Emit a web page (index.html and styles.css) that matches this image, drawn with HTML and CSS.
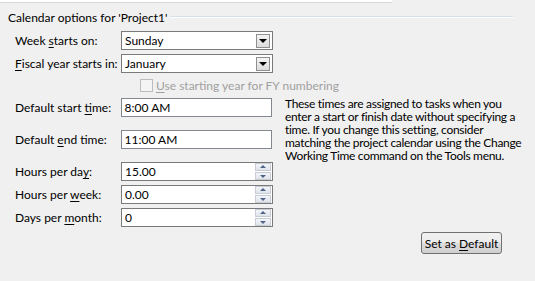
FILE: index.html
```html
<!DOCTYPE html>
<html lang="en">
<head>
  <meta charset="UTF-8">
  <title>Calendar options</title>
  <link rel="stylesheet" href="styles.css">
</head>
<body>
  <div class="top-strip"></div>

  <div class="group-title">
    <span>Calendar options for 'Project1'</span>
    <div class="etch"></div>
  </div>

  <div class="row">
    <label class="lbl">Week <u>s</u>tarts on:</label>
    <div class="select">
      <span>Sunday</span>
      <div class="drop"><div class="tri"></div></div>
    </div>
  </div>

  <div class="row row-tight">
    <label class="lbl"><u>F</u>iscal year starts in:</label>
    <div class="select">
      <span>January</span>
      <div class="drop"><div class="tri"></div></div>
    </div>
  </div>

  <div class="check-row">
    <div class="check"></div>
    <span class="disabled"><u>U</u>se starting year for FY numbering</span>
  </div>

  <!-- times + hint text -->
  <div class="times">
    <div class="times-left">
      <div class="row">
        <label class="lbl">Default start <u>t</u>ime:</label>
        <div class="field"><span>8:00 AM</span></div>
      </div>
      <div class="row row-wide">
        <label class="lbl">Default <u>e</u>nd time:</label>
        <div class="field"><span>11:00 AM</span></div>
      </div>
    </div>
    <p class="hint">These times are assigned to tasks when you enter a start or finish date without specifying a time. If you change this setting, consider matching the project calendar using the Change Working Time command on the Tools menu.</p>
  </div>

  <div class="row row-spin">
    <label class="lbl">Hours per da<u>y</u>:</label>
    <div class="spin">
      <span>15.00</span>
      <div class="arrows"><div class="up"></div><div class="down"></div></div>
    </div>
  </div>

  <div class="row row-tight">
    <label class="lbl">Hours per <u>w</u>eek:</label>
    <div class="spin">
      <span>0.00</span>
      <div class="arrows"><div class="up"></div><div class="down"></div></div>
    </div>
  </div>

  <div class="row row-tight">
    <label class="lbl">Days per <u>m</u>onth:</label>
    <div class="spin">
      <span>0</span>
      <div class="arrows"><div class="up"></div><div class="down"></div></div>
    </div>
  </div>

  <div class="actions">
    <button class="btn">Set as <u>D</u>efault</button>
  </div>
</body>
</html>
```

FILE: styles.css
```css
body {
  margin: 0;
  background-color: #f0f0f0;
  font-family: Lato, "Liberation Sans", sans-serif;
  font-size: 12px;
  color: #000;
  width: 535px;
  height: 281px;
  overflow: hidden;
}

u {
  text-decoration-thickness: 1px;
  text-underline-offset: 2px;
}

.top-strip {
  width: 392px;
  height: 2px;
  background-color: #fff;
  border-bottom: 1px solid #d8d8d8;
}

.group-title {
  display: flex;
  align-items: center;
  margin: 7px 22px 0 8px;
  height: 14px;
}

.group-title span {
  white-space: nowrap;
  margin-right: 3px;
}

.etch {
  flex: 1;
  height: 0;
  border-top: 1px solid #d5dfe5;
  border-bottom: 1px solid #fff;
}

.row {
  display: flex;
  align-items: center;
  margin-top: 3px;
  padding-left: 15px;
  height: 19px;
}

.group-title + .row {
  margin-top: 7px;
}

.row-tight {
  margin-top: 4px;
}

.row-wide {
  margin-top: 13px;
}

.row-spin {
  margin-top: 15px;
}

.lbl {
  width: 106px;
  white-space: nowrap;
}

.select, .field, .spin {
  box-sizing: border-box;
  width: 152px;
  height: 19px;
  background-color: #fff;
  border: 1px solid #7a7a7a;
  display: flex;
  align-items: center;
  padding-left: 3px;
}

.field {
  border-color: #828790;
}

.select span, .field span, .spin span {
  flex: 1;
}

.drop {
  box-sizing: border-box;
  width: 14px;
  height: 14px;
  margin-right: 2px;
  border: 1px solid #8f8f8f;
  background: linear-gradient(#f4f4f4, #dcdcdc);
  display: flex;
  align-items: center;
  justify-content: center;
}

.tri {
  width: 0;
  height: 0;
  border-left: 4px solid transparent;
  border-right: 4px solid transparent;
  border-top: 4px solid #000;
  margin-top: 1px;
}

.check-row {
  display: flex;
  align-items: center;
  margin-top: 5px;
  padding-left: 140px;
  height: 14px;
}

.check {
  box-sizing: border-box;
  width: 13px;
  height: 13px;
  border: 1px solid #bcbcbc;
  background-color: #f4f4f4;
  margin-right: 3px;
}

.disabled {
  color: #a0a0a0;
}

.times {
  display: flex;
  margin-top: 3px;
  height: 52px;
}

.times-left {
  width: 272px;
}

.hint {
  margin: 2px 0 0 13px;
  width: 244px;
  line-height: 13px;
  letter-spacing: -0.3px;
}

.spin {
  padding-right: 1px;
}

.arrows {
  display: flex;
  flex-direction: column;
  gap: 1px;
}

.up, .down {
  box-sizing: border-box;
  width: 16px;
  height: 8px;
  border: 1px solid #c8ccd4;
  background: linear-gradient(#f3f5f8, #dfe4ea);
  position: relative;
}

.up::after, .down::after {
  content: "";
  position: absolute;
  left: 4px;
  top: 1px;
  border-left: 3px solid transparent;
  border-right: 3px solid transparent;
}

.up::after {
  border-bottom: 3px solid #4f6489;
}

.down::after {
  border-top: 3px solid #4f6489;
  top: 2px;
}

.actions {
  display: flex;
  justify-content: flex-end;
  margin: 5px 33px 0 0;
}

.btn {
  box-sizing: border-box;
  width: 81px;
  height: 22px;
  font-family: inherit;
  font-size: 12px;
  color: #000;
  border: 1px solid #707070;
  border-radius: 3px;
  background: linear-gradient(#f2f2f2 0%, #ebebeb 50%, #dddddd 51%, #cfcfcf 100%);
  padding: 0;
}
```
